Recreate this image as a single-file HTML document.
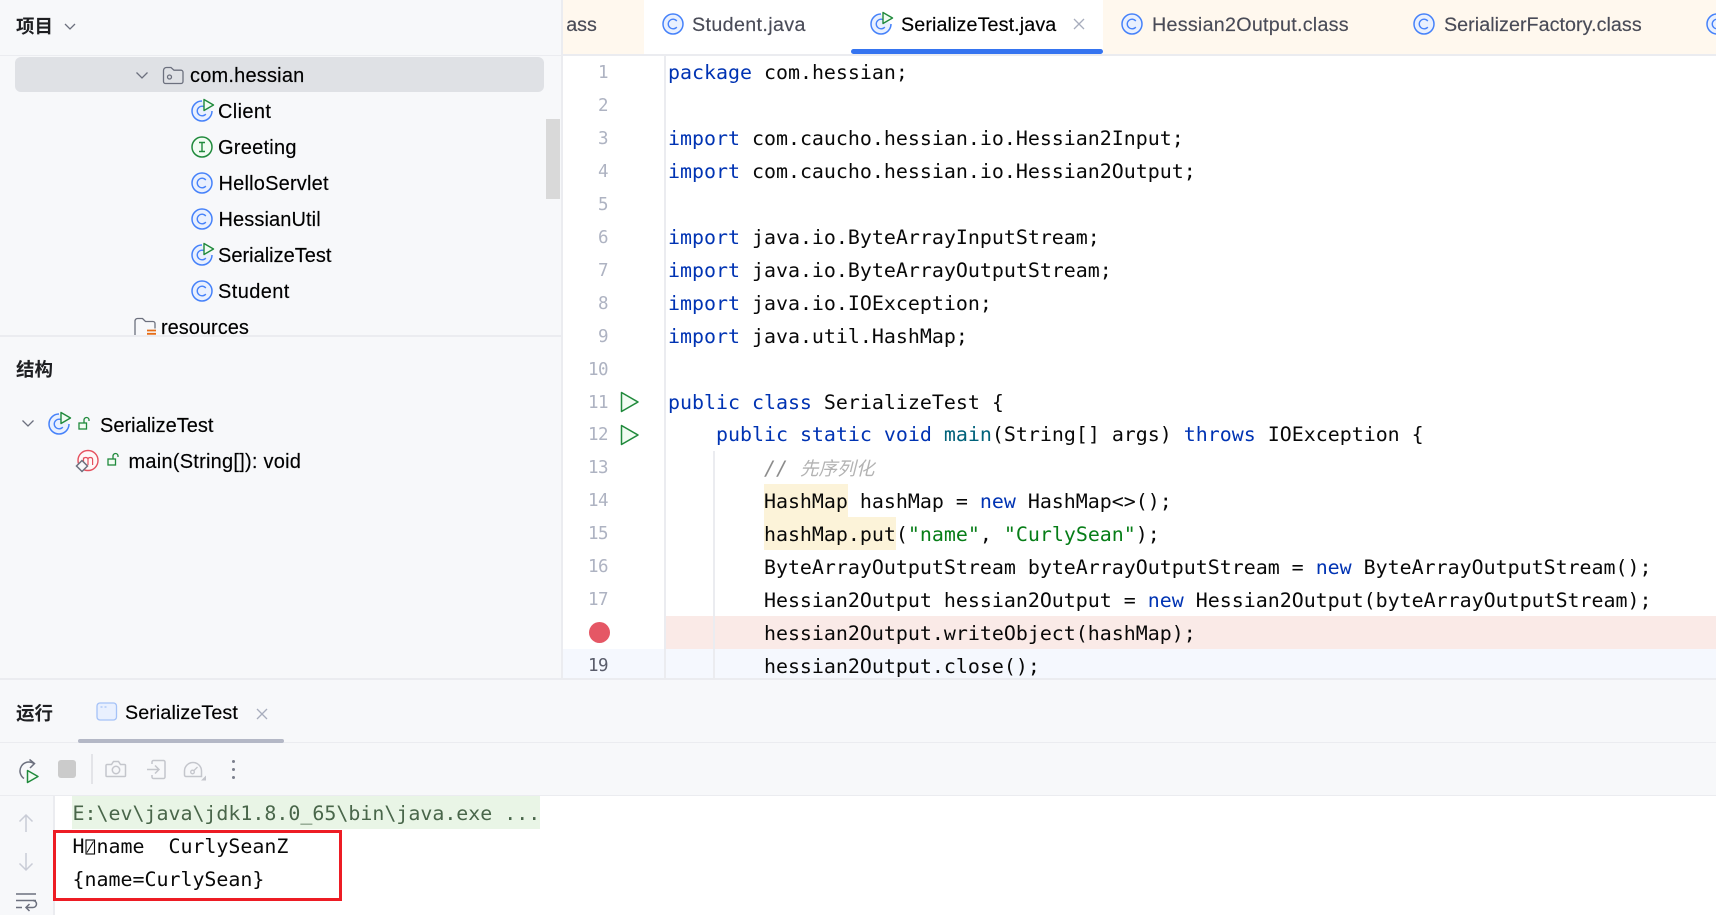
<!DOCTYPE html>
<html><head><meta charset="utf-8"><style>
html,body{margin:0;padding:0;width:1716px;height:915px;overflow:hidden;background:#fff}
#r{position:relative;width:1716px;height:915px;overflow:hidden;background:#fff;font-family:"Liberation Sans","Noto Sans CJK SC",sans-serif;color:#000}
.a{position:absolute}
.t{position:absolute;white-space:pre;font-size:20px;line-height:36px;height:36px;-webkit-text-stroke:.15px currentColor}
.h{position:absolute;white-space:pre;font-size:18.5px;font-weight:700;line-height:30px;color:#1e1f22;font-family:"Noto Sans CJK SC","Liberation Sans",sans-serif}
.tab{color:#494b57}
svg{position:absolute;overflow:visible;fill:none}
pre{position:absolute;margin:0;font-family:"DejaVu Sans Mono","Liberation Mono",monospace;font-size:19.93px;line-height:32.95px;color:#080808}
.k{color:#0033b3}.m{color:#00627a}.s{color:#067d17}
.c{color:#8c8c8c;font-style:italic}
.cj{font-family:"Noto Sans CJK SC",sans-serif;font-size:18.6px;color:#b3b3b3;font-style:italic}
</style></head><body><div id="r">

<!-- left panel -->
<div class="a" style="left:0;top:0;width:561px;height:679px;background:#f7f8fa"></div>
<div class="a" style="left:0;top:55px;width:561px;height:1px;background:#ebecf0"></div>
<div class="a" style="left:561px;top:0;width:2px;height:679px;background:#ebecf0"></div>
<div class="h" style="left:16px;top:11px">项目</div>
<svg style="left:64px;top:22px" width="12" height="10"><path d="M1 2l5 5 5-5" stroke="#6c707e" stroke-width="1.3"/></svg>

<div class="a" style="left:15px;top:57px;width:529px;height:35px;background:#dfe1e5;border-radius:6px"></div>
<svg style="left:135px;top:71px" width="14" height="10"><path d="M1.5 1.5l5.5 5.5 5.5-5.5" stroke="#6c707e" stroke-width="1.3"/></svg>
<svg style="left:162px;top:65px" width="22" height="20"><path d="M1.5 5.5a3 3 0 0 1 3-3h4.5l3 2.7h7a2 2 0 0 1 2 2v9.3a2 2 0 0 1-2 2h-15.500a2 2 0 0 1-2-2z" stroke="#6c707e" stroke-width="1.300"/><circle cx="7.500" cy="12" r="2" stroke="#6c707e" stroke-width="1.300"/></svg>
<div class="t" style="left:190px;top:58px;letter-spacing:.2px">com.hessian</div>

<!-- tree icons -->
<svg style="left:191px;top:98px" width="24" height="26"><path d="M11 3A10 10 0 1 0 21 13" fill="#e9f0fe" stroke="#4682fa" stroke-width="1.500"/><path d="M14.800 10A4.800 4.800 0 1 0 14.800 16" stroke="#4682fa" stroke-width="1.400"/><path d="M13 1.500L22.500 7L13 12.500Z" fill="#f2fcf3" stroke="#208a3c" stroke-width="1.400" stroke-linejoin="round"/></svg>
<div class="t" style="left:218px;top:94px;letter-spacing:.35px">Client</div>
<svg style="left:191px;top:134px" width="24" height="26"><circle cx="11" cy="13" r="10" fill="#f2fcf3" stroke="#208a3c" stroke-width="1.500"/><path d="M8 8.500h6M11 8.500v9M8 17.500h6" stroke="#208a3c" stroke-width="1.400"/></svg>
<div class="t" style="left:218px;top:130px;letter-spacing:.25px">Greeting</div>
<svg style="left:191px;top:170px" width="24" height="26"><circle cx="11" cy="13" r="10" fill="#e9f0fe" stroke="#4682fa" stroke-width="1.500"/><path d="M14.800 10A4.800 4.800 0 1 0 14.800 16" stroke="#4682fa" stroke-width="1.400"/></svg>
<div class="t" style="left:218.500px;top:166px;letter-spacing:.2px">HelloServlet</div>
<svg style="left:191px;top:206px" width="24" height="26"><circle cx="11" cy="13" r="10" fill="#e9f0fe" stroke="#4682fa" stroke-width="1.500"/><path d="M14.800 10A4.800 4.800 0 1 0 14.800 16" stroke="#4682fa" stroke-width="1.400"/></svg>
<div class="t" style="left:218.500px;top:202px;letter-spacing:.1px">HessianUtil</div>
<svg style="left:191px;top:242px" width="24" height="26"><path d="M11 3A10 10 0 1 0 21 13" fill="#e9f0fe" stroke="#4682fa" stroke-width="1.500"/><path d="M14.800 10A4.800 4.800 0 1 0 14.800 16" stroke="#4682fa" stroke-width="1.400"/><path d="M13 1.500L22.500 7L13 12.500Z" fill="#f2fcf3" stroke="#208a3c" stroke-width="1.400" stroke-linejoin="round"/></svg>
<div class="t" style="left:218px;top:238px">SerializeTest</div>
<svg style="left:191px;top:278px" width="24" height="26"><circle cx="11" cy="13" r="10" fill="#e9f0fe" stroke="#4682fa" stroke-width="1.500"/><path d="M14.800 10A4.800 4.800 0 1 0 14.800 16" stroke="#4682fa" stroke-width="1.400"/></svg>
<div class="t" style="left:218px;top:274px;letter-spacing:.4px">Student</div>
<svg style="left:134px;top:317px" width="24" height="20"><path d="M1 18V4a2.500 2.500 0 0 1 2.500-2.500h5l3 3h7.500a2 2 0 0 1 2 2v5" stroke="#6c707e" stroke-width="1.300"/><path d="M13 13.500h9M13 16.800h9" stroke="#e66d17" stroke-width="1.800"/></svg>
<div class="t" style="left:161px;top:310px">resources</div>

<div class="a" style="left:546px;top:119px;width:14px;height:80px;background:#d9d9d9"></div>

<!-- structure -->
<div class="a" style="left:0;top:335px;width:561px;height:344px;background:#f7f8fa;border-top:2px solid #ebecf0;box-sizing:border-box"></div>
<div class="h" style="left:16px;top:354px">结构</div>
<svg style="left:21px;top:419px" width="14" height="10"><path d="M1.500 1.500l5.500 5.500 5.500-5.500" stroke="#6c707e" stroke-width="1.300"/></svg>
<svg style="left:48px;top:411px" width="24" height="26"><path d="M11 3A10 10 0 1 0 21 13" fill="#e9f0fe" stroke="#4682fa" stroke-width="1.500"/><path d="M14.800 10A4.800 4.800 0 1 0 14.800 16" stroke="#4682fa" stroke-width="1.400"/><path d="M13 1.500L22.500 7L13 12.500Z" fill="#f2fcf3" stroke="#208a3c" stroke-width="1.400" stroke-linejoin="round"/></svg>
<svg style="left:78px;top:417px" width="14" height="14"><rect x="1" y="6" width="7.500" height="6" fill="#f2fcf3" stroke="#208a3c" stroke-width="1.300"/><path d="M6 6V3a2.500 2.500 0 0 1 5 0v1" stroke="#208a3c" stroke-width="1.300"/></svg>
<div class="t" style="left:100px;top:408px">SerializeTest</div>
<svg style="left:76px;top:449px" width="26" height="26"><circle cx="12" cy="11.500" r="10" fill="#fff7f7" stroke="#e5505e" stroke-width="1.400"/><path d="M7.500 16V8.500M7.500 10.500q0-2 2.200-2t2.300 2V16M12 10.500q0-2 2.300-2t2.300 2V16" stroke="#e5505e" stroke-width="1.200"/><path d="M6 11.500l5.500 5.500-5.500 5.500-5.500-5.500z" fill="#f7f8fa" stroke="#6c707e" stroke-width="1.500"/></svg>
<svg style="left:107px;top:453px" width="14" height="14"><rect x="1" y="6" width="7.500" height="6" fill="#f2fcf3" stroke="#208a3c" stroke-width="1.300"/><path d="M6 6V3a2.500 2.500 0 0 1 5 0v1" stroke="#208a3c" stroke-width="1.300"/></svg>
<div class="t" style="left:128.500px;top:444px;letter-spacing:.24px">main(String[]): void</div>

<!-- tab bar -->
<div class="a" style="left:563px;top:0;width:1153px;height:54px;background:#fff8ee"></div>
<div class="a" style="left:644px;top:0;width:459px;height:54px;background:#fff"></div>
<div class="a" style="left:563px;top:54px;width:1153px;height:2px;background:#ebecf0"></div>
<div class="a" style="left:851px;top:49px;width:252px;height:5px;background:#3574f0;border-radius:3px"></div>
<div class="a" style="left:565px;top:7px;width:40px;height:36px;overflow:hidden"><div class="t tab" style="left:-13px;top:0;font-size:19.700px">class</div></div>
<svg style="left:662px;top:11px" width="24" height="26"><circle cx="11" cy="13" r="10" fill="#e9f0fe" stroke="#4682fa" stroke-width="1.500"/><path d="M14.800 10A4.800 4.800 0 1 0 14.800 16" stroke="#4682fa" stroke-width="1.400"/></svg>
<div class="t tab" style="left:692px;top:7px;font-size:19.700px;letter-spacing:.36px">Student.java</div>
<svg style="left:870px;top:11px" width="24" height="26"><path d="M11 3A10 10 0 1 0 21 13" fill="#e9f0fe" stroke="#4682fa" stroke-width="1.500"/><path d="M14.800 10A4.800 4.800 0 1 0 14.800 16" stroke="#4682fa" stroke-width="1.400"/><path d="M13 1.500L22.500 7L13 12.500Z" fill="#f2fcf3" stroke="#208a3c" stroke-width="1.400" stroke-linejoin="round"/></svg>
<div class="t" style="left:901px;top:7px;font-size:19.700px;letter-spacing:.12px">SerializeTest.java</div>
<svg style="left:1073px;top:18px" width="12" height="12"><path d="M1 1l10 10M11 1L1 11" stroke="#a8adbd" stroke-width="1.300"/></svg>
<svg style="left:1121px;top:11px" width="24" height="26"><circle cx="11" cy="13" r="10" fill="#e9f0fe" stroke="#4682fa" stroke-width="1.500"/><path d="M14.800 10A4.800 4.800 0 1 0 14.800 16" stroke="#4682fa" stroke-width="1.400"/></svg>
<div class="t tab" style="left:1152px;top:7px;font-size:19.700px;letter-spacing:.27px">Hessian2Output.class</div>
<svg style="left:1413px;top:11px" width="24" height="26"><circle cx="11" cy="13" r="10" fill="#e9f0fe" stroke="#4682fa" stroke-width="1.500"/><path d="M14.800 10A4.800 4.800 0 1 0 14.800 16" stroke="#4682fa" stroke-width="1.400"/></svg>
<div class="t tab" style="left:1444px;top:7px;font-size:19.700px;letter-spacing:.05px">SerializerFactory.class</div>
<svg style="left:1706px;top:11px" width="24" height="26"><circle cx="11" cy="13" r="10" fill="#e9f0fe" stroke="#4682fa" stroke-width="1.500"/><path d="M14.800 10A4.800 4.800 0 1 0 14.800 16" stroke="#4682fa" stroke-width="1.400"/></svg>

<!-- editor backgrounds -->
<div class="a" style="left:563px;top:649px;width:1153px;height:30px;background:#f5f8fe"></div>
<div class="a" style="left:666px;top:616px;width:1050px;height:33px;background:#faeae7"></div>
<div class="a" style="left:664px;top:56px;width:2px;height:623px;background:#ebecf0"></div>
<div class="a" style="left:713px;top:451px;width:2px;height:228px;background:#ebecf0"></div>
<div class="a" style="left:764px;top:484px;width:84px;height:33px;background:#fcf3d9"></div>
<div class="a" style="left:764px;top:517px;width:132px;height:33px;background:#fcf3d9"></div>

<!-- line numbers -->
<div class="a" style="left:563px;top:57px;width:47px;height:622px;overflow:hidden">
<pre style="right:2px;top:0;text-align:right;font-size:17.500px;letter-spacing:-.53px;color:#aeb3c2">1
2
3
4
5
6
7
8
9
10
11
12
13
14
15
16
17

<span style="color:#5a5d6b">19</span></pre></div>
<div class="a" style="left:589px;top:621.500px;width:21px;height:21px;border-radius:50%;background:#e55765"></div>
<svg style="left:620px;top:391px" width="20" height="22"><path d="M1.500 1.500L18 11L1.500 20.500Z" fill="#f2fcf3" stroke="#208a3c" stroke-width="1.500" stroke-linejoin="round"/></svg>
<svg style="left:620px;top:424px" width="20" height="22"><path d="M1.500 1.500L18 11L1.500 20.500Z" fill="#f2fcf3" stroke="#208a3c" stroke-width="1.500" stroke-linejoin="round"/></svg>

<!-- code -->
<div class="a" style="left:668px;top:57px;width:1048px;height:622px;overflow:hidden">
<pre style="left:0;top:0"><span class="k">package</span> com.hessian;

<span class="k">import</span> com.caucho.hessian.io.Hessian2Input;
<span class="k">import</span> com.caucho.hessian.io.Hessian2Output;

<span class="k">import</span> java.io.ByteArrayInputStream;
<span class="k">import</span> java.io.ByteArrayOutputStream;
<span class="k">import</span> java.io.IOException;
<span class="k">import</span> java.util.HashMap;

<span class="k">public class</span> SerializeTest {
    <span class="k">public static void</span> <span class="m">main</span>(String[] args) <span class="k">throws</span> IOException {
        <span class="c">// </span><span class="cj">先序列化</span>
        HashMap hashMap = <span class="k">new</span> HashMap&lt;&gt;();
        hashMap.put(<span class="s">"name"</span>, <span class="s">"CurlySean"</span>);
        ByteArrayOutputStream byteArrayOutputStream = <span class="k">new</span> ByteArrayOutputStream();
        Hessian2Output hessian2Output = <span class="k">new</span> Hessian2Output(byteArrayOutputStream);
        hessian2Output.writeObject(hashMap);
        hessian2Output.close();</pre></div>

<!-- run panel -->
<div class="a" style="left:0;top:679px;width:1716px;height:116px;background:#f7f8fa"></div>
<div class="a" style="left:0;top:678px;width:1716px;height:2px;background:#ebecf0"></div>
<div class="a" style="left:0;top:742px;width:1716px;height:1px;background:#ebecf0"></div>
<div class="a" style="left:0;top:795px;width:1716px;height:1px;background:#ebecf0"></div>
<div class="h" style="left:16px;top:698px">运行</div>
<svg style="left:96px;top:702px" width="22" height="20"><rect x="1" y="1" width="19.500" height="17" rx="3" fill="#e9f0fe" stroke="#a5c2f7" stroke-width="1.300"/><path d="M4.500 5h2M8.500 5h2" stroke="#a5c2f7" stroke-width="1.300"/></svg>
<div class="t" style="left:125px;top:695px;font-size:19.700px;letter-spacing:.1px">SerializeTest</div>
<svg style="left:256px;top:708px" width="12" height="12"><path d="M1 1l10 10M11 1L1 11" stroke="#a8adbd" stroke-width="1.300"/></svg>
<div class="a" style="left:78px;top:739px;width:206px;height:4px;background:#b4b8c6;border-radius:2px"></div>

<!-- toolbar -->
<svg style="left:16px;top:758px" width="26" height="26"><path d="M8 20.500A8.500 8.500 0 1 1 18 5.500" stroke="#6c707e" stroke-width="1.500"/><path d="M13.500 1.500L18.500 5.500L14 10" stroke="#6c707e" stroke-width="1.500"/><path d="M11.500 12.500L22 18.500L11.500 24.500Z" fill="#f2fcf3" stroke="#208a3c" stroke-width="1.500" stroke-linejoin="round"/></svg>
<div class="a" style="left:58px;top:760px;width:18px;height:18px;background:#cbcbcb;border-radius:3px"></div>
<div class="a" style="left:91px;top:754px;width:2px;height:30px;background:#e3e4e8"></div>
<svg style="left:105px;top:759px" width="22" height="20"><path d="M2 5.500h4.500l2-3h5l2 3h4a1 1 0 0 1 1 1v10a1 1 0 0 1-1 1h-17.500a1 1 0 0 1-1-1v-10a1 1 0 0 1 1-1z" stroke="#c4c6cc" stroke-width="1.500"/><circle cx="11" cy="11" r="3.700" stroke="#c4c6cc" stroke-width="1.500"/></svg>
<svg style="left:146px;top:759px" width="21" height="21"><path d="M6 5V3a1.500 1.500 0 0 1 1.500-1.500h10a1.500 1.500 0 0 1 1.500 1.500v15a1.500 1.500 0 0 1-1.500 1.500h-10a1.500 1.500 0 0 1-1.500-1.500v-2" stroke="#c4c6cc" stroke-width="1.500"/><path d="M1 10.500h12M9 6.500l4 4-4 4" stroke="#c4c6cc" stroke-width="1.500"/></svg>
<svg style="left:183px;top:760px" width="24" height="22"><path d="M3 16.500a1.500 1.500 0 0 1-1.500-1.500V11a8.500 8.500 0 0 1 17 0v5.500z" stroke="#c4c6cc" stroke-width="1.500"/><circle cx="9.500" cy="12" r="1.800" stroke="#c4c6cc" stroke-width="1.300"/><path d="M11 10.500l3.500-3.500" stroke="#c4c6cc" stroke-width="1.300"/><path d="M23 15.500v5h-5z" fill="#c4c6cc"/></svg>
<div class="a" style="left:231.500px;top:760px;width:3px;height:3px;border-radius:50%;background:#7b7f8c"></div>
<div class="a" style="left:231.500px;top:768px;width:3px;height:3px;border-radius:50%;background:#7b7f8c"></div>
<div class="a" style="left:231.500px;top:776px;width:3px;height:3px;border-radius:50%;background:#7b7f8c"></div>

<!-- console -->
<div class="a" style="left:0;top:796px;width:55px;height:119px;background:#f7f8fa;border-right:2px solid #ebecf0;box-sizing:border-box"></div>
<svg style="left:18px;top:813px" width="16" height="20"><path d="M8 19V2M1.500 8.500L8 2l6.500 6.500" stroke="#c9ccd6" stroke-width="1.500"/></svg>
<svg style="left:18px;top:852px" width="16" height="20"><path d="M8 1v17M1.500 11.500L8 18l6.500-6.500" stroke="#c9ccd6" stroke-width="1.500"/></svg>
<svg style="left:15px;top:892px" width="22" height="20"><path d="M1 2h20M1 8.500h20" stroke="#6c707e" stroke-width="1.500"/><path d="M1 15.500h6M11 15.500h7a2.500 2.500 0 0 0 0-7" stroke="#6c707e" stroke-width="1.500"/><path d="M14.500 12l-3.500 3.500 3.500 3.500" stroke="#6c707e" stroke-width="1.500"/></svg>
<div class="a" style="left:72px;top:796px;width:468px;height:33px;background:#e9f5e6"></div>
<pre style="left:72.500px;top:797.500px;color:#49664a">E:\ev\java\jdk1.8.0_65\bin\java.exe ...</pre>
<pre style="left:72.500px;top:831px">H name  CurlySeanZ
{name=CurlySean}</pre>
<svg style="left:85px;top:838.500px" width="11" height="16"><rect x="1" y="1" width="8.500" height="14" stroke="#080808" stroke-width="1.100"/><path d="M2 13.500L8.500 2.500" stroke="#080808"/></svg>
<div class="a" style="left:53px;top:830px;width:289px;height:71px;border:3px solid #ed1c24;box-sizing:border-box"></div>
</div></body></html>
